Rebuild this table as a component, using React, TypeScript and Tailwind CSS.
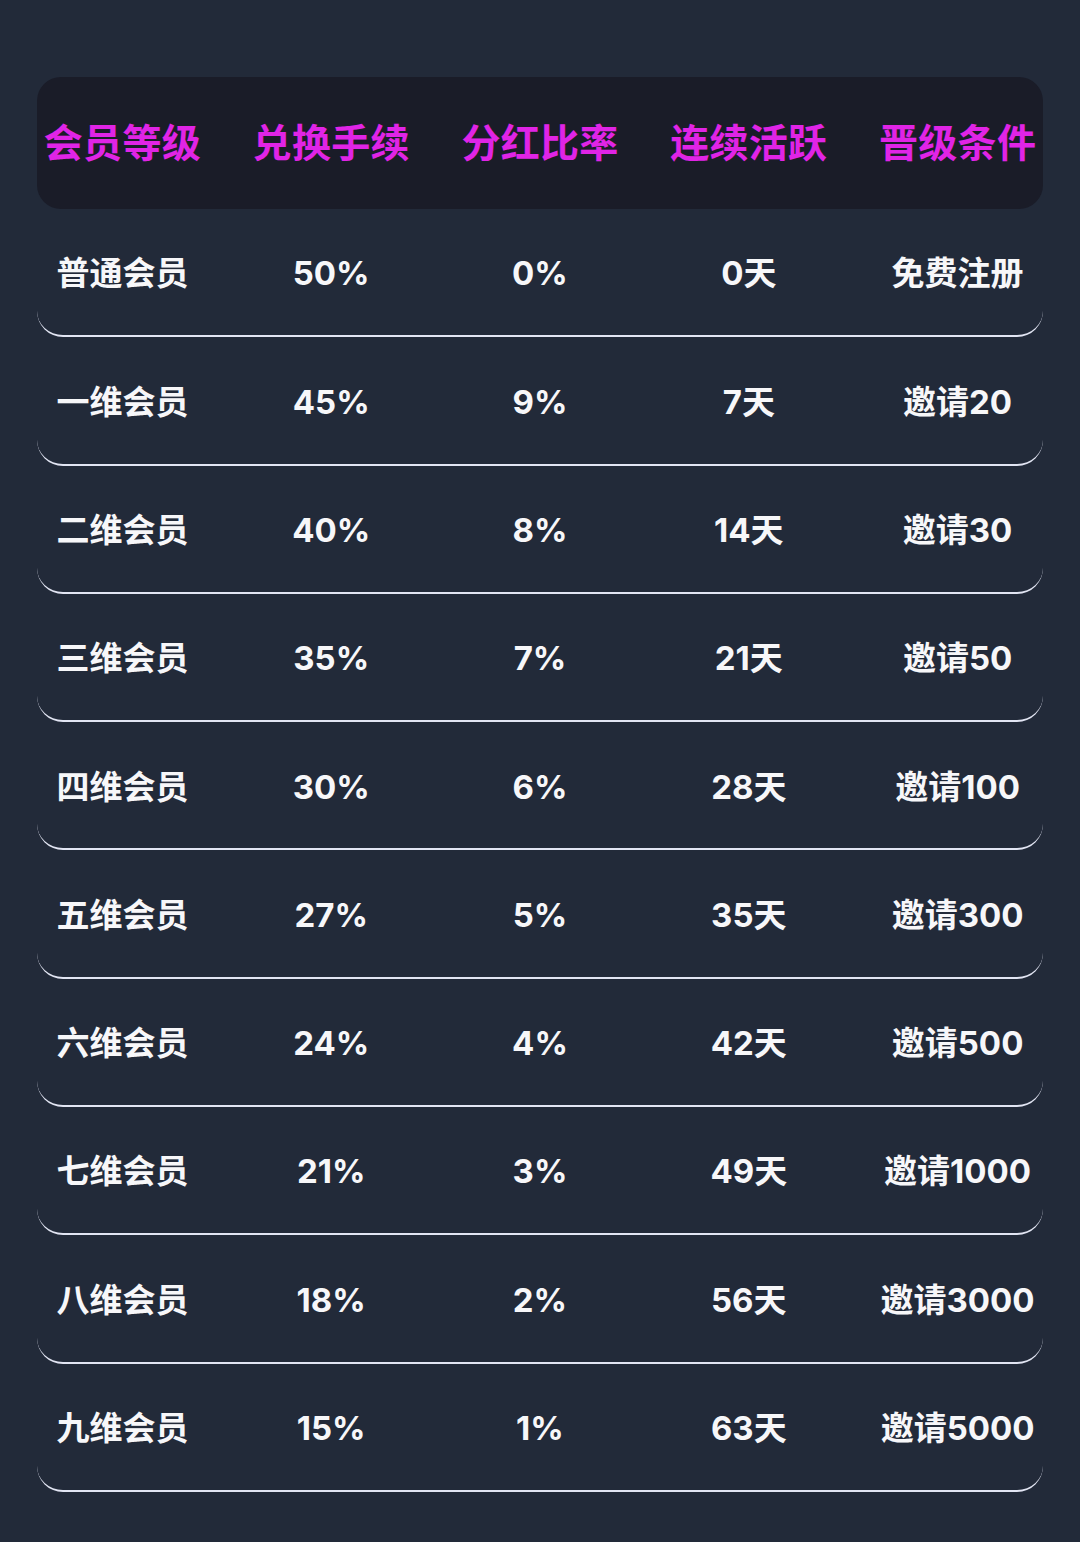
const headers = ['会员等级', '兑换手续', '分红比率', '连续活跃', '晋级条件'];

const rows = [
  ['普通会员', '50%', '0%', '0天', '免费注册'],
  ['一维会员', '45%', '9%', '7天', '邀请20'],
  ['二维会员', '40%', '8%', '14天', '邀请30'],
  ['三维会员', '35%', '7%', '21天', '邀请50'],
  ['四维会员', '30%', '6%', '28天', '邀请100'],
  ['五维会员', '27%', '5%', '35天', '邀请300'],
  ['六维会员', '24%', '4%', '42天', '邀请500'],
  ['七维会员', '21%', '3%', '49天', '邀请1000'],
  ['八维会员', '18%', '2%', '56天', '邀请3000'],
  ['九维会员', '15%', '1%', '63天', '邀请5000'],
];

export default function App() {
  return (
    <div
      className="min-h-[1542px] w-[1080px] bg-[#222a39] pt-[77px] pb-[50px]"
      style={{ fontFamily: 'Inter, "Noto Sans CJK SC", sans-serif' }}
    >
      {/* Header */}
      <div className="mx-[37px] h-[132px] rounded-[24px] bg-[#1a1c28]">
        <div className="-mx-[19px] grid h-full grid-cols-5 items-center">
          {headers.map((h) => (
            <div key={h} className="text-center text-[39px] font-bold tracking-[0.3px] text-[#e024e6]">
              {h}
            </div>
          ))}
        </div>
      </div>

      {/* Rows */}
      {rows.map((row) => (
        <div
          key={row[0]}
          className="mx-[37px] h-[128.3px] rounded-b-[26px] border-b-[2.5px] border-[#e2e5f3] pt-[4px]"
        >
          <div className="-mx-[19px] grid h-full grid-cols-5 items-center">
            {row.map((cell, i) => (
              <div key={i} className="text-center text-[33px] font-bold text-[#f7f7f9]">
                {cell}
              </div>
            ))}
          </div>
        </div>
      ))}
    </div>
  );
}
